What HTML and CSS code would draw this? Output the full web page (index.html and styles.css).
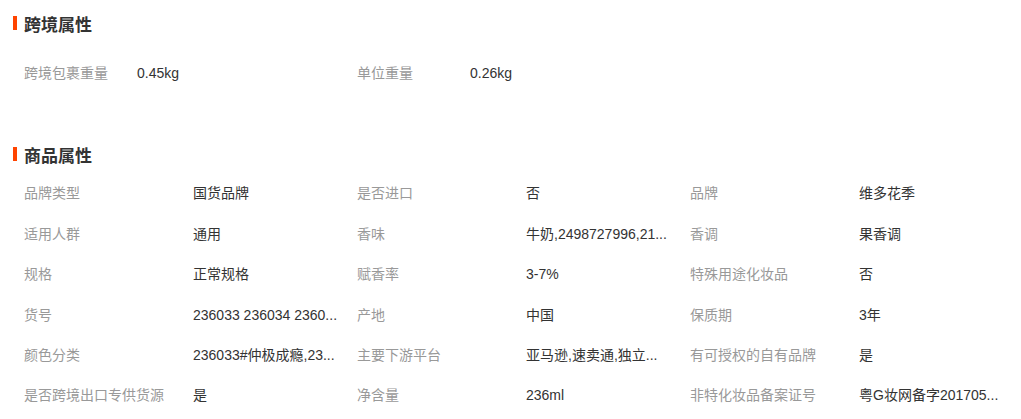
FILE: index.html
```html
<!DOCTYPE html>
<html lang="zh-CN">
  <head>
    <meta charset="UTF-8" />
    <title>商品属性</title>
    <link rel="stylesheet" href="styles.css">
  </head>
  <body>
    <div class="attr-page">
      <!-- 跨境属性 -->
      <section class="attr-block cross">
        <h3 class="attr-title">跨境属性</h3>
        <ul class="attr-list">
          <li><span class="attr-name">跨境包裹重量</span><span class="attr-value">0.45kg</span></li>
          <li><span class="attr-name">单位重量</span><span class="attr-value">0.26kg</span></li>
        </ul>
      </section>

      <!-- 商品属性 -->
      <section class="attr-block goods">
        <h3 class="attr-title">商品属性</h3>
        <ul class="attr-list">
          <li><span class="attr-name">品牌类型</span><span class="attr-value">国货品牌</span></li>
          <li><span class="attr-name">是否进口</span><span class="attr-value">否</span></li>
          <li><span class="attr-name">品牌</span><span class="attr-value">维多花季</span></li>

          <li><span class="attr-name">适用人群</span><span class="attr-value">通用</span></li>
          <li><span class="attr-name">香味</span><span class="attr-value">牛奶,2498727996,21...</span></li>
          <li><span class="attr-name">香调</span><span class="attr-value">果香调</span></li>

          <li><span class="attr-name">规格</span><span class="attr-value">正常规格</span></li>
          <li><span class="attr-name">赋香率</span><span class="attr-value">3-7%</span></li>
          <li><span class="attr-name">特殊用途化妆品</span><span class="attr-value">否</span></li>

          <li><span class="attr-name">货号</span><span class="attr-value">236033 236034 2360...</span></li>
          <li><span class="attr-name">产地</span><span class="attr-value">中国</span></li>
          <li><span class="attr-name">保质期</span><span class="attr-value">3年</span></li>

          <li><span class="attr-name">颜色分类</span><span class="attr-value">236033#仲极成瘾,23...</span></li>
          <li><span class="attr-name">主要下游平台</span><span class="attr-value">亚马逊,速卖通,独立...</span></li>
          <li><span class="attr-name">有可授权的自有品牌</span><span class="attr-value">是</span></li>

          <li><span class="attr-name">是否跨境出口专供货源</span><span class="attr-value">是</span></li>
          <li><span class="attr-name">净含量</span><span class="attr-value">236ml</span></li>
          <li><span class="attr-name">非特化妆品备案证号</span><span class="attr-value">粤G妆网备字201705...</span></li>
        </ul>
      </section>
    </div>
  </body>
</html>
```

FILE: styles.css
```css
* {
  margin: 0;
  padding: 0;
  box-sizing: border-box;
}

body {
  font-family: "Liberation Sans", "Noto Sans CJK SC", sans-serif;
  font-size: 14px;
  color: #333;
  background: #fff;
  overflow: hidden;
}

.attr-page {
  padding: 6px 0 0 13px;
}

.attr-title {
  display: flex;
  align-items: center;
  height: 36px;
  padding-bottom: 2px;
  font-size: 17px;
  font-weight: bold;
  color: #333;
}

.attr-title::before {
  content: "";
  width: 4px;
  height: 14px;
  margin-right: 7px;
  background: #ff4400;
}

.attr-list {
  list-style: none;
  display: grid;
  grid-template-columns: repeat(3, 333px);
  padding-left: 11px;
}

.attr-list li {
  display: flex;
  height: 40.4px;
  line-height: 40.4px;
  white-space: nowrap;
}

.attr-name {
  color: #999;
}

.attr-value {
  color: #333;
}

.cross .attr-list {
  margin-top: 11px;
}

.cross .attr-name {
  width: 113px;
}

.goods {
  margin-top: 44px;
}

.goods .attr-name {
  width: 169px;
}
```
